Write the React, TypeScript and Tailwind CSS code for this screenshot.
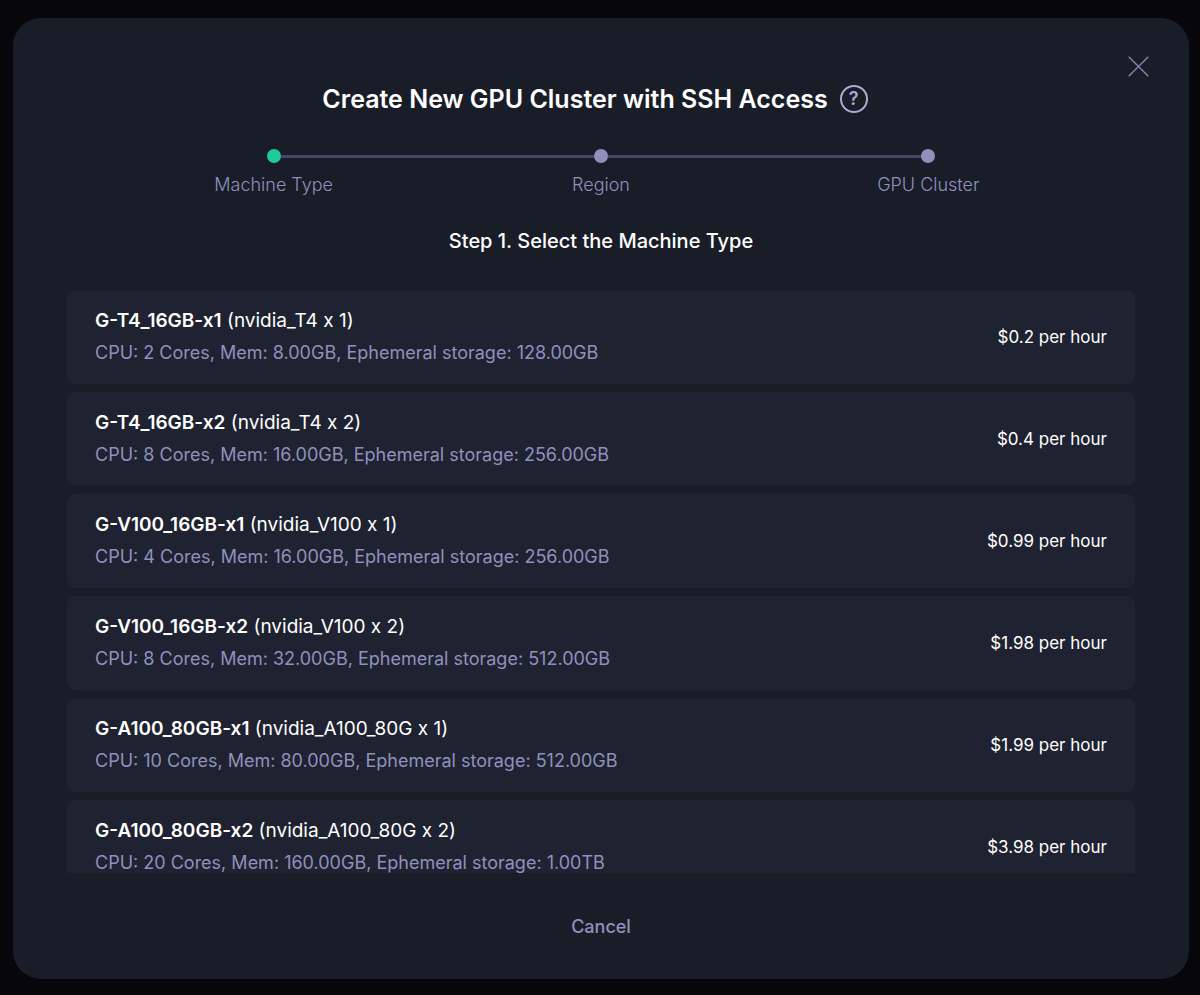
type Machine = {
  name: string;
  gpu: string;
  cpu: number;
  mem: string;
  storage: string;
  price: string;
};

const STEPS = ["Machine Type", "Region", "GPU Cluster"];

const MACHINES: Machine[] = [
  { name: "G-T4_16GB-x1", gpu: "nvidia_T4 x 1", cpu: 2, mem: "8.00GB", storage: "128.00GB", price: "$0.2" },
  { name: "G-T4_16GB-x2", gpu: "nvidia_T4 x 2", cpu: 8, mem: "16.00GB", storage: "256.00GB", price: "$0.4" },
  { name: "G-V100_16GB-x1", gpu: "nvidia_V100 x 1", cpu: 4, mem: "16.00GB", storage: "256.00GB", price: "$0.99" },
  { name: "G-V100_16GB-x2", gpu: "nvidia_V100 x 2", cpu: 8, mem: "32.00GB", storage: "512.00GB", price: "$1.98" },
  { name: "G-A100_80GB-x1", gpu: "nvidia_A100_80G x 1", cpu: 10, mem: "80.00GB", storage: "512.00GB", price: "$1.99" },
  { name: "G-A100_80GB-x2", gpu: "nvidia_A100_80G x 2", cpu: 20, mem: "160.00GB", storage: "1.00TB", price: "$3.98" },
];

function Stepper({ current }: { current: number }) {
  return (
    <ol className="grid grid-cols-3 px-[43px]">
      {STEPS.map((label, i) => (
        <li key={label} aria-current={i === current ? "step" : undefined}>
          <div className="flex items-center">
            <span className={`h-[3px] flex-1 ${i === 0 ? "" : "bg-[#43456b]"}`} />
            <span className={`size-3.5 rounded-full ${i === current ? "bg-[#1dca9b]" : "bg-[#8f91bd]"}`} />
            <span className={`h-[3px] flex-1 ${i === STEPS.length - 1 ? "" : "bg-[#43456b]"}`} />
          </div>
          <p className="mt-2 text-center text-lg leading-7 font-light text-[#8f91bd]">{label}</p>
        </li>
      ))}
    </ol>
  );
}

function MachineRow({ machine }: { machine: Machine }) {
  return (
    <li>
      <button
        type="button"
        className="flex w-full items-center justify-between rounded-lg bg-[#1f2230] px-7 py-[15px] text-left leading-8 text-white"
      >
        <span>
          <span className="block text-[19px]">
            {/* calt would turn the "x" between digits into a multiplication sign */}
            <span className="font-semibold">{machine.name}</span>{" "}
            <span className="[font-variant-ligatures:no-contextual]">({machine.gpu})</span>
          </span>
          <span className="block text-lg leading-8 text-[#8f91bd]">
            CPU: {machine.cpu} Cores, Mem: {machine.mem}, Ephemeral storage: {machine.storage}
          </span>
        </span>
        <span className="text-[17px]">{machine.price} per hour</span>
      </button>
    </li>
  );
}

export default function App() {
  return (
    <div className="flex h-screen bg-[#06060b] pt-[18px] pr-[11px] pb-4 pl-[13px] font-['Inter',sans-serif]">
      <div
        role="dialog"
        aria-labelledby="dialog-title"
        className="flex min-w-0 flex-1 flex-col rounded-[28px] bg-[#191d28] px-[54px] pt-[38px] pb-[38px]"
      >
        <button type="button" aria-label="Close" className="-mr-3.5 self-end text-[#8385ae]">
          <svg viewBox="0 0 21 21" className="size-[21px]" fill="none" stroke="currentColor" strokeWidth="1.4">
            <path d="M0.7 0.7L20.3 20.3M20.3 0.7L0.7 20.3" />
          </svg>
        </button>

        <div className="mt-1 flex items-center justify-center gap-3 pr-3">
          <h1 id="dialog-title" className="text-[25px] leading-9 font-semibold text-white">
            Create New GPU Cluster with SSH Access
          </h1>
          <button
            type="button"
            aria-label="Help"
            className="flex size-7 items-center justify-center rounded-full border-2 border-[#a9abcf] text-lg leading-6 font-semibold text-[#a9abcf]"
          >
            ?
          </button>
        </div>

        <div className="mt-8">
          <Stepper current={0} />
        </div>

        <h2 className="mt-7 text-center text-xl leading-7 font-medium text-white">
          Step 1. Select the Machine Type
        </h2>

        <ul className="mt-[35px] flex min-h-0 flex-1 flex-col gap-2 overflow-y-auto [scrollbar-width:none]">
          {MACHINES.map((m) => (
            <MachineRow key={m.name} machine={m} />
          ))}
        </ul>

        <button type="button" className="mt-10 self-center text-lg leading-7 font-medium text-[#8f91bd]">
          Cancel
        </button>
      </div>
    </div>
  );
}
